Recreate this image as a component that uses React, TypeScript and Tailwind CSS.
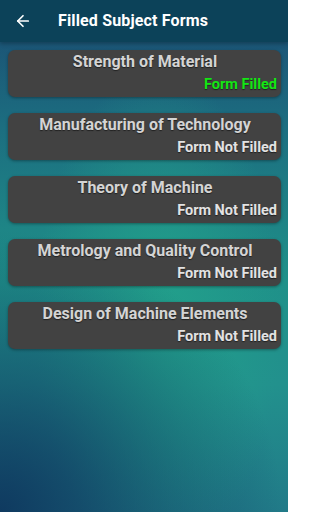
import { ArrowLeft } from "lucide-react";

const SUBJECTS = [
  { name: "Strength of Material", filled: true },
  { name: "Manufacturing of Technology", filled: false },
  { name: "Theory of Machine", filled: false },
  { name: "Metrology and Quality Control", filled: false },
  { name: "Design of Machine Elements", filled: false },
];

export default function App() {
  return (
    <div
      className="relative h-[512px] w-[288px] overflow-hidden font-['Roboto','Liberation_Sans',sans-serif] bg-[radial-gradient(circle_at_0%_100%,#0f3a60_0%,rgba(15,58,96,0)_48%),radial-gradient(ellipse_at_55%_62%,#22a08b_0%,rgba(34,160,139,0)_55%),linear-gradient(to_bottom,#1b4a72_0%,#1c6e80_25%,#1f9189_55%,#22918d_75%,#217a88_100%)]"
    >
      <header className="flex h-[42px] items-center bg-[#0c4259] shadow-[0_2px_4px_rgba(0,0,0,0.25)]">
        <button className="ml-[13px] flex h-5 w-5 items-center justify-center text-white">
          <ArrowLeft size={18} strokeWidth={2.25} />
        </button>
        <h1 className="ml-[25px] text-[16px] font-bold tracking-[0.15px] text-white">
          Filled Subject Forms
        </h1>
      </header>

      <main className="flex flex-col gap-[16px] pl-[8px] pr-[7px] pt-[8px]">
        {SUBJECTS.map((s) => (
          <div
            key={s.name}
            className="flex h-[47px] flex-col rounded-[7px] bg-[#424242] pl-[5px] pr-[4px] pt-[2px] shadow-[0_1px_3px_rgba(0,0,0,0.35)]"
          >
            <p className="text-center text-[16px] font-bold leading-[20px] text-[#d4d4d4] [text-shadow:0_1px_1px_rgba(0,0,0,0.5)]">
              {s.name}
            </p>
            <p
              className={`mt-[4px] text-right text-[14.5px] font-bold leading-[18px] [text-shadow:0_1px_1px_rgba(0,0,0,0.5)] ${
                s.filled ? "text-[#14e614]" : "text-[#e2e2e2]"
              }`}
            >
              {s.filled ? "Form Filled" : "Form Not Filled"}
            </p>
          </div>
        ))}
      </main>
    </div>
  );
}
